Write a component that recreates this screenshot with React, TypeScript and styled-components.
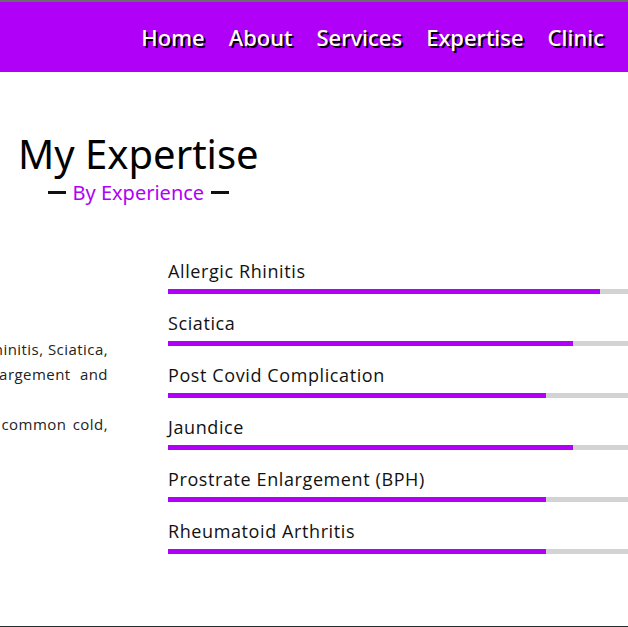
import React from "react";
import styled, { createGlobalStyle } from "styled-components";

const Global = createGlobalStyle`
  html, body { margin: 0; padding: 0; background: #fff; }
  body { overflow: hidden; font-family: "Open Sans", sans-serif; }
`;

const PURPLE = "#b000f7";

const Page = styled.div`
  width: 628px;
  height: 627px;
  overflow: hidden;
  display: flex;
  flex-direction: column;
`;

const Header = styled.header`
  height: 70px;
  border-top: 2px solid #6b6b6b;
  background: ${PURPLE};
  display: flex;
  align-items: center;
  justify-content: flex-end;
  padding-right: 24px;
  gap: 24px;
`;

const NavLink = styled.a`
  font-family: "Noto Sans", "Open Sans", sans-serif;
  font-size: 22px;
  font-weight: 500;
  color: #fff;
  text-shadow: 2px 2px 0 #000;
  text-decoration: none;
  margin-top: -1px;
`;

const Main = styled.main`
  flex: 1;
  border-bottom: 1px solid #1f2f2f;
  display: flex;
  flex-direction: column;
`;

const TitleBlock = styled.div`
  align-self: flex-start;
  margin: 56px 0 0 18px;
  display: flex;
  flex-direction: column;
  align-items: center;
`;

const Title = styled.h1`
  margin: 0;
  font-family: "Noto Sans", sans-serif;
  font-weight: 400;
  font-size: 40px;
  line-height: 52px;
  color: #000;
`;

const Subtitle = styled.div`
  display: flex;
  align-items: center;
  gap: 7px;
  font-family: "Noto Sans", sans-serif;
  font-size: 20px;
  color: ${PURPLE};
  margin-top: -1px;
`;

const Dash = styled.span`
  width: 18px;
  height: 3px;
  background: #111;
`;

const Content = styled.div`
  display: flex;
  margin-top: 52px;
`;

const Intro = styled.div`
  flex: none;
  width: 480px;
  margin-left: -372px;
  margin-right: 60px;
  padding-top: 79px;
  font-family: "Open Sans", sans-serif;
  font-size: 15px;
  letter-spacing: 0.45px;
  line-height: 25px;
  color: #222;
`;

const Line = styled.div<{ $last?: boolean; $spread?: number }>`
  display: flex;
  justify-content: ${(p) => (p.$last ? "flex-start" : "flex-end")};
  white-space: nowrap;
  word-spacing: ${(p) => p.$spread ?? 0}px;
`;

const Skills = styled.div`
  flex: none;
  width: 540px;
  display: flex;
  flex-direction: column;
  gap: 16px;
`;

const Skill = styled.div`
  display: flex;
  flex-direction: column;
  gap: 5px;
`;

const Label = styled.div`
  font-family: "Open Sans", sans-serif;
  font-size: 18px;
  letter-spacing: 0.6px;
  line-height: 26px;
  color: #111;
`;

const Track = styled.div`
  height: 5px;
  background: #d3d3d3;
`;

const Fill = styled.div`
  height: 100%;
  background: ${PURPLE};
`;

const skills = [
  { name: "Allergic Rhinitis", pct: 80 },
  { name: "Sciatica", pct: 75 },
  { name: "Post Covid Complication", pct: 70 },
  { name: "Jaundice", pct: 75 },
  { name: "Prostrate Enlargement (BPH)", pct: 70 },
  { name: "Rheumatoid Arthritis", pct: 70 },
];

const introLines = [
  { text: "Over the years I have treated Allergic Rhinitis, Sciatica,", last: false, spread: 0 },
  { text: "Jaundice, Post Covid, Prostrate Enlargement and", last: false, spread: 5 },
  { text: "Rheumatoid Arthritis.", last: true, spread: 0 },
  { text: "I also treat acute diseases such as fever, cough, common cold,", last: false, spread: 2 },
  { text: "headache etc.", last: true, spread: 0 },
];

export default function App() {
  return (
    <Page>
      <Global />
      <Header>
        {["Home", "About", "Services", "Expertise", "Clinic"].map((n) => (
          <NavLink key={n} href="#">
            {n}
          </NavLink>
        ))}
      </Header>
      <Main>
        <TitleBlock>
          <Title>My Expertise</Title>
          <Subtitle>
            <Dash />
            By Experience
            <Dash />
          </Subtitle>
        </TitleBlock>
        <Content>
          <Intro>
            {introLines.map((l, i) => (
              <Line key={i} $last={l.last} $spread={l.spread}>
                {l.text}
              </Line>
            ))}
          </Intro>
          <Skills>
            {skills.map((s) => (
              <Skill key={s.name}>
                <Label>{s.name}</Label>
                <Track>
                  <Fill style={{ width: `${s.pct}%` }} />
                </Track>
              </Skill>
            ))}
          </Skills>
        </Content>
      </Main>
    </Page>
  );
}
